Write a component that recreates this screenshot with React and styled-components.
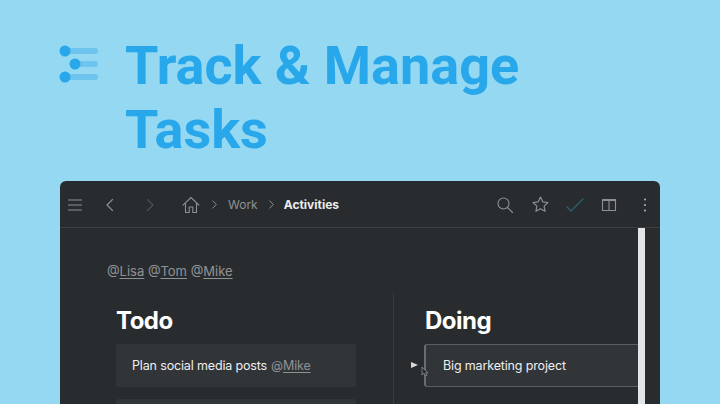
import React from "react";
import styled, { createGlobalStyle } from "styled-components";

const Global = createGlobalStyle`
  html, body { margin: 0; padding: 0; background: #94d8f2; }
  body { font-family: "Inter", "Liberation Sans", sans-serif; }
`;

const Page = styled.div`
  width: 720px;
  height: 404px;
  overflow: hidden;
  background: #94d8f2;
`;

const Hero = styled.header`
  display: flex;
  align-items: flex-start;
  gap: 27px;
  height: 181px;
  padding: 34px 0 0 58px;
  box-sizing: border-box;
`;

const Logo = styled.svg`
  width: 40px;
  height: 40px;
  margin-top: 10px;
  flex: none;
`;

const Title = styled.h1`
  margin: 0;
  font-family: "Roboto", "Liberation Sans", sans-serif;
  font-size: 54px;
  line-height: 63.5px;
  font-weight: 700;
  color: #28a7ea;
`;

const Window = styled.section`
  width: 600px;
  height: 240px;
  margin-left: 60px;
  background: #292c2e;
  border-radius: 6px 6px 0 0;
  overflow: hidden;
`;

const Toolbar = styled.div`
  display: flex;
  align-items: center;
  height: 47px;
  padding: 1px 8px 0;
  box-sizing: border-box;
  border-bottom: 1px solid #3c3f42;
`;

const ToolIcon = styled.svg`
  width: ${(p) => p.$size || 20}px;
  height: ${(p) => p.$size || 20}px;
  margin-left: ${(p) => p.$gap || 0}px;
  flex: none;
  fill: none;
  stroke: ${(p) => p.$color || "#8e9194"};
  stroke-width: ${(p) => p.$stroke || 1.1};
  stroke-linecap: round;
  stroke-linejoin: round;
`;

const Crumb = styled.span`
  margin-left: ${(p) => p.$gap || 0}px;
  font-size: 12px;
  line-height: 16px;
  font-weight: ${(p) => (p.$current ? 700 : 400)};
  color: ${(p) => (p.$current ? "#eceded" : "#8e9194")};
`;

const Spacer = styled.div`
  flex: 1;
`;

const Body = styled.div`
  display: flex;
  height: 193px;
  padding-right: 15px;
`;

const Content = styled.div`
  flex: 1;
  min-width: 0;
  overflow: hidden;
`;

const Scrollbar = styled.div`
  width: 7px;
  flex: none;
  background: #e4e5e6;
`;

const Mentions = styled.p`
  margin: 33px 0 0 47px;
  font-size: 13px;
  line-height: 20px;
  color: #8f9295;
`;

const Mention = styled.span`
  color: #8f9295;
  u {
    text-underline-offset: 2px;
    text-decoration-thickness: 1px;
  }
`;

const Columns = styled.div`
  display: flex;
  margin-top: 12px;
  padding-left: 56px;
  width: 640px;
`;

const Column = styled.div`
  width: ${(p) => p.$width}px;
  flex: none;
  box-sizing: border-box;
  ${(p) =>
    p.$divided &&
    `
    margin-left: 37px;
    padding-left: 31px;
    border-left: 1px solid #3a3d40;
  `}
`;

const Heading = styled.h2`
  margin: 0 0 5px;
  padding-top: 10px;
  font-size: 24px;
  line-height: 36px;
  font-weight: 700;
  letter-spacing: -0.5px;
  color: #ffffff;
`;

const Card = styled.div`
  position: relative;
  display: flex;
  align-items: center;
  box-sizing: border-box;
  height: 43px;
  margin-bottom: 12px;
  padding-left: 16px;
  background: #323538;
  border-radius: 3px;
  font-size: 12.5px;
  letter-spacing: -0.15px;
  color: #eeeff0;
  ${(p) =>
    p.$active &&
    `
    width: 240px;
    margin-left: -1px;
    padding-left: 17px;
    border: 1px solid #5c5f62;
    border-left: 2px solid #6a6d70;
  `}
`;

const CardMention = styled.span`
  margin-left: 4px;
  color: #8f9295;
  u {
    text-underline-offset: 2px;
    text-decoration-thickness: 1px;
  }
`;

const DragHandle = styled.span`
  position: absolute;
  left: -15px;
  top: 17px;
  width: 0;
  height: 0;
  border-left: 7px solid #d8d9da;
  border-top: 3.5px solid transparent;
  border-bottom: 3.5px solid transparent;
`;

const Pointer = styled.svg`
  position: absolute;
  left: -5px;
  top: 21px;
  width: 8px;
  height: 11px;
`;

const Dot = styled.span`
  position: absolute;
  right: -6px;
  top: 15px;
  width: 12px;
  height: 12px;
  border-radius: 50%;
  background: #55585b;
`;

export default function App() {
  return (
    <Page>
      <Global />
      <Hero>
        <Logo viewBox="0 0 40 40">
          <g fill="#6cc4ef">
            <rect x="6" y="4" width="34" height="6" rx="3" />
            <rect x="14" y="17" width="26" height="6" rx="3" />
            <rect x="6" y="30" width="34" height="6" rx="3" />
          </g>
          <g fill="#28a7ea">
            <circle cx="7" cy="7" r="5.500" />
            <circle cx="17" cy="20" r="5.500" />
            <circle cx="7" cy="33" r="5.500" />
          </g>
        </Logo>
        <Title>
          Track &amp; Manage
          <br />
          Tasks
        </Title>
      </Hero>
      <Window>
        <Toolbar>
          {/* menu */}
          <ToolIcon viewBox="0 0 14 14" $size={14}>
            <path d="M.5 2h13M.5 7h13M.5 12h13" />
          </ToolIcon>
          {/* back and forward */}
          <ToolIcon viewBox="0 0 14 14" $size={14} $gap={21}>
            <path d="M9.500 1.500 4 7l5.500 5.500" />
          </ToolIcon>
          <ToolIcon viewBox="0 0 14 14" $size={14} $gap={26} $color="#4f5255">
            <path d="M4.500 1.500 10 7l-5.500 5.500" />
          </ToolIcon>
          {/* home */}
          <ToolIcon viewBox="0 0 18 18" $size={18} $gap={25}>
            <path d="M1 9.200 9 1.500l8 7.700M3.500 7.500v9h3.700v-5.500h3.600v5.500h3.700v-9" />
          </ToolIcon>
          <ToolIcon viewBox="0 0 8 10" $size={9} $gap={10}>
            <path d="M2 1l4 4-4 4" />
          </ToolIcon>
          <Crumb $gap={9}>Work</Crumb>
          <ToolIcon viewBox="0 0 8 10" $size={9} $gap={9}>
            <path d="M2 1l4 4-4 4" />
          </ToolIcon>
          <Crumb $current $gap={8}>
            Activities
          </Crumb>
          <Spacer />
          {/* search */}
          <ToolIcon viewBox="0 0 16 16" $size={16}>
            <circle cx="6.500" cy="6.500" r="5.500" />
            <path d="m10.500 10.500 5 5" />
          </ToolIcon>
          {/* star */}
          <ToolIcon viewBox="0 0 16 16" $size={17} $gap={19}>
            <path d="m8 1 2.100 4.500 4.900.6-3.600 3.400.9 4.900L8 11.900l-4.300 2.500.9-4.900L1 6.100l4.900-.6z" />
          </ToolIcon>
          {/* done */}
          <ToolIcon viewBox="0 0 18 14" $size={18} $gap={17} $color="#2a5f6b" $stroke={1.4}>
            <path d="M1 9l4 4L17 1" />
          </ToolIcon>
          {/* split view */}
          <ToolIcon viewBox="0 0 16 14" $size={16} $gap={17}>
            <path d="M1.500 1.500h13v11h-13zM8 1.500v11M1.500 2.500h13" />
          </ToolIcon>
          {/* more */}
          <ToolIcon viewBox="0 0 4 14" $size={14} $gap={21} $color="#b4b6b8" $stroke={2}>
            <path d="M2 1.500v.01M2 7v.01M2 12.500v.01" />
          </ToolIcon>
        </Toolbar>
        <Body>
          <Content>
            <Mentions>
              <Mention>
                @<u>Lisa</u>
              </Mention>{" "}
              <Mention>
                @<u>Tom</u>
              </Mention>{" "}
              <Mention>
                @<u>Mike</u>
              </Mention>
            </Mentions>
            <Columns>
              <Column $width={240}>
                <Heading>Todo</Heading>
                <Card>
                  Plan social media posts
                  <CardMention>
                    @<u>Mike</u>
                  </CardMention>
                </Card>
                <Card />
              </Column>
              <Column $width={300} $divided>
                <Heading>Doing</Heading>
                <Card $active>
                  <DragHandle />
                  <Pointer viewBox="0 0 8 11">
                    <path d="M1 1v8l2-1.800L4.500 10l1.500-.7L4.700 6.800H7z" fill="#282b2e" stroke="#8e9194" strokeWidth="0.8" />
                  </Pointer>
                  Big marketing project
                  <Dot />
                </Card>
              </Column>
            </Columns>
          </Content>
          <Scrollbar />
        </Body>
      </Window>
    </Page>
  );
}
